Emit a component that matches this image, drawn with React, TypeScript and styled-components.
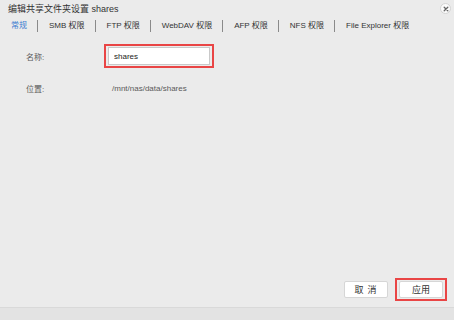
import styled, { createGlobalStyle } from "styled-components"

const GlobalStyle = createGlobalStyle`
  html, body {
    margin: 0;
    padding: 0;
    background: #ebebeb;
  }
  body {
    font-family: "Liberation Sans", Arial, "Noto Sans CJK SC", sans-serif;
  }
`

const tabs = ["常规", "SMB 权限", "FTP 权限", "WebDAV 权限", "AFP 权限", "NFS 权限", "File Explorer 权限"]

const App = () => {
  return (
    <Dialog>
      <GlobalStyle />
      <TitleBar>
        <Title>编辑共享文件夹设置 shares</Title>
        <CloseButton aria-label="close">
          <svg width="6" height="6" viewBox="0 0 6 6">
            <path d="M1.2 1.2 L4.8 4.8 M4.8 1.2 L1.2 4.8" stroke="#666" strokeWidth="1.3" strokeLinecap="round" />
          </svg>
        </CloseButton>
      </TitleBar>
      <TabBar>
        {tabs.map((t, i) => (
          <Tab key={t} $active={i === 0} $last={i === tabs.length - 1}>
            {t}
          </Tab>
        ))}
      </TabBar>
      <Body>
        <Form>
          <Row $height={26}>
            <Label>名称:</Label>
            <Highlight>
              <Input defaultValue="shares" />
            </Highlight>
          </Row>
          <Row $height={12}>
            <Label>位置:</Label>
            <PathText>/mnt/nas/data/shares</PathText>
          </Row>
        </Form>
        <Footer>
          <Button $spaced>取 消</Button>
          <Highlight>
            <Button>应用</Button>
          </Highlight>
        </Footer>
      </Body>
      <StatusStrip />
    </Dialog>
  )
}

export default App

const Dialog = styled.div`
  display: flex;
  flex-direction: column;
  width: 454px;
  height: 320px;
  background: #ebebeb;
  overflow: hidden;
`

const TitleBar = styled.div`
  display: flex;
  align-items: center;
  justify-content: space-between;
  height: 17px;
  padding: 0 3px 0 8px;
`

const Title = styled.div`
  font-size: 9px;
  color: #333;
`

const CloseButton = styled.div`
  display: flex;
  align-items: center;
  justify-content: center;
  width: 11px;
  height: 11px;
  border-radius: 50%;
  background: #fbfbfb;
  border: 1px solid #d4d4d4;
  box-sizing: border-box;
`

const TabBar = styled.div`
  display: flex;
  align-items: center;
  height: 17px;
  padding-left: 11px;
`

const Tab = styled.div<{ $active?: boolean; $last?: boolean }>`
  font-size: 8px;
  line-height: 12px;
  color: ${(p) => (p.$active ? "#3b7bd0" : "#333")};
  padding-right: 10px;
  margin-right: 11px;
  border-right: ${(p) => (p.$last ? "none" : "1px solid #8a8a8a")};
  white-space: nowrap;
`

const Body = styled.div`
  flex: 1;
  display: flex;
  flex-direction: column;
  justify-content: space-between;
`

const Form = styled.div`
  display: flex;
  flex-direction: column;
  gap: 13px;
  padding: 9px 0 0 26px;
`

const Row = styled.div<{ $height: number }>`
  display: flex;
  align-items: center;
  height: ${(p) => p.$height}px;
`

const Label = styled.div`
  width: 78px;
  font-size: 8px;
  color: #5a5a5a;
`

const Highlight = styled.div`
  display: flex;
  padding: 1px 2px;
  border: 2px solid #e94545;
`

const Input = styled.input`
  width: 102px;
  height: 18px;
  box-sizing: border-box;
  border: 1px solid #c9c9c9;
  background: #fff;
  padding: 0 5px;
  font-family: "Liberation Sans", Arial, sans-serif;
  font-size: 8px;
  color: #222;
  outline: none;
`

const PathText = styled.div`
  padding-left: 8px;
  font-size: 8px;
  color: #5a5a5a;
`

const Footer = styled.div`
  display: flex;
  align-items: center;
  justify-content: flex-end;
  gap: 7px;
  padding: 0 7px 6px 0;
`

const Button = styled.div<{ $spaced?: boolean }>`
  display: flex;
  align-items: center;
  justify-content: center;
  width: 44px;
  height: 17px;
  box-sizing: border-box;
  background: #fff;
  border: 1px solid #d6d6d6;
  border-radius: 2px;
  font-family: "Noto Sans CJK SC", sans-serif;
  font-size: 9px;
  color: #333;
  letter-spacing: ${(p) => (p.$spaced ? "1px" : "0")};
  white-space: pre;
`

const StatusStrip = styled.div`
  height: 12px;
  background: #e3e3e3;
  border-top: 1px solid #d9d9d9;
`
